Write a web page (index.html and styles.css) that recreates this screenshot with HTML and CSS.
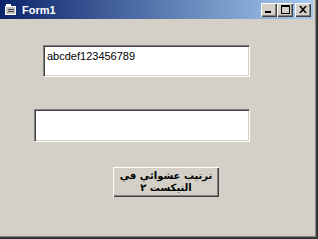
FILE: index.html
```html
<!DOCTYPE html>
<html lang="ar">
<head>
    <meta charset="UTF-8">
    <title>Form1</title>
    <link rel="stylesheet" href="styles.css">
</head>
<body>
    <div class="window">
        <div class="titlebar">
            <svg class="app-icon" width="12" height="12" viewBox="0 0 12 12">
                <rect x="0" y="2" width="11" height="9" fill="#fff"/>
                <rect x="1" y="3" width="9" height="7" fill="#c0c0c0"/>
                <rect x="1" y="0" width="5" height="3" fill="#fff"/>
                <rect x="3" y="5" width="6" height="1" fill="#404040"/>
                <rect x="3" y="7" width="6" height="1" fill="#404040"/>
            </svg>
            <span class="title">Form1</span>
            <div class="caption-btns">
                <button class="cap-btn">
                    <svg width="8" height="7" viewBox="0 0 8 7"><rect x="0" y="5" width="6" height="2" fill="#000"/></svg>
                </button>
                <button class="cap-btn">
                    <svg width="9" height="9" viewBox="0 0 9 9"><path d="M0 0h9v9H0z M1 2v6h7V2z" fill="#000" fill-rule="evenodd"/></svg>
                </button>
                <button class="cap-btn close">
                    <svg width="8" height="7" viewBox="0 0 8 7"><path d="M0 0h2l2 2.3L6 0h2L5 3.5 8 7H6L4 4.7 2 7H0l3-3.5z" fill="#000"/></svg>
                </button>
            </div>
        </div>
        <div class="client">
            <input class="textbox tb1" type="text" value="abcdef123456789">
            <input class="textbox tb2" type="text" value="">
            <button class="cmd" dir="rtl">ترتيب عشوائي في<br>التيكست ٢</button>
        </div>
    </div>
</body>
</html>
```

FILE: styles.css
```css
* {
    box-sizing: border-box;
    margin: 0;
}
body {
    width: 318px;
    height: 239px;
    background-color: #2b2b2b;
    overflow: hidden;
}
.window {
    width: 317px;
    height: 238px;
    background-color: #d4d0c8;
    border-right: 1px solid #404040;
    border-bottom: 1px solid #404040;
    box-shadow: inset -1px -1px #808080;
    display: flex;
    flex-direction: column;
    padding-right: 3px;
}
.titlebar {
    height: 19px;
    display: flex;
    align-items: center;
    background: linear-gradient(to right, #0a246a, #a6caf0);
    padding-left: 5px;
}
.app-icon {
    margin-right: 5px;
    margin-top: 1px;
}
.title {
    font-family: "Liberation Sans", Arial, sans-serif;
    font-weight: bold;
    font-size: 11px;
    color: #fff;
    flex-grow: 1;
}
.caption-btns {
    display: flex;
    margin-right: 2px;
}
.cap-btn {
    width: 16px;
    height: 14px;
    padding: 0;
    background-color: #d4d0c8;
    border: none;
    box-shadow: inset 1px 1px #fff, inset -1px -1px #404040, inset -2px -2px #808080;
    display: flex;
    align-items: center;
    justify-content: center;
}
.cap-btn.close {
    margin-left: 2px;
}
.client {
    flex-grow: 1;
}
.textbox {
    display: block;
    background-color: #fff;
    font-family: "Liberation Sans", Arial, sans-serif;
    font-size: 11px;
    color: #000;
    padding: 0 3px;
    border-top: 1px solid #808080;
    border-left: 1px solid #808080;
    border-bottom: 1px solid #fff;
    border-right: 1px solid #fff;
    box-shadow: inset 1px 1px #404040, inset -1px -1px #d4d0c8;
    outline: none;
}
.tb1 {
    width: 207px;
    height: 32px;
    margin: 26px 0 0 43px;
    padding-top: 3px;
    padding-bottom: 13px;
}
.tb2 {
    width: 216px;
    height: 33px;
    margin: 32px 0 0 34px;
}
.cmd {
    display: block;
    width: 106px;
    height: 30px;
    margin: 25px 0 0 113px;
    padding: 0 0 1px;
    background-color: #d4d0c8;
    border: none;
    box-shadow: inset 1px 1px #fff, inset -1px -1px #404040, inset -2px -2px #808080;
    font-family: "DejaVu Sans", sans-serif;
    font-weight: bold;
    font-size: 10px;
    line-height: 12px;
    color: #000;
}
```
